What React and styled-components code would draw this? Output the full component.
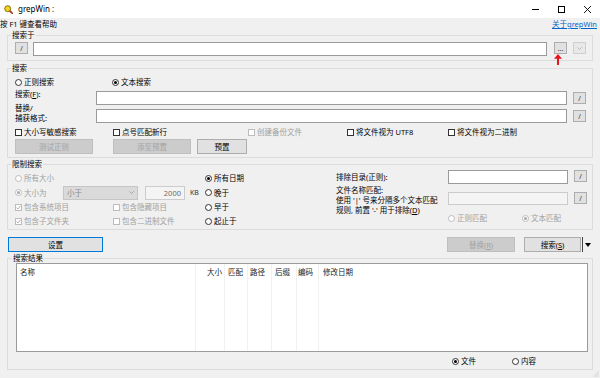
import React from 'react';
import styled, { createGlobalStyle } from 'styled-components';

// grepWin 主窗口

const FONT = `"Noto Sans", "Noto Sans CJK SC", sans-serif`;

const GlobalStyle = createGlobalStyle`
  html, body { margin: 0; padding: 0; background: #f0f0f0; }
  * { box-sizing: border-box; }
`;

const Window = styled.div`
  width: 600px;
  height: 378px;
  position: relative;
  overflow: hidden;
  background: #f0f0f0;
  font-family: ${FONT};
  font-size: 7.5px;
  line-height: 10px;
  color: #000;
  display: flex;
  flex-direction: column;
`;

const TitleBar = styled.div`
  height: 18px;
  flex: none;
  background: #fff;
  display: flex;
  align-items: center;
  padding-left: 4px;
`;

const TitleText = styled.span`
  margin-left: 5px;
  font-size: 8px;
  color: #000;
`;

const Controls = styled.div`
  margin-left: auto;
  display: flex;
  height: 100%;
`;

const CtrlBox = styled.div`
  width: 26px;
  height: 100%;
  display: flex;
  align-items: center;
  justify-content: center;
`;

const HelpRow = styled.div`
  height: 12px;
  flex: none;
  display: flex;
  align-items: center;
  justify-content: space-between;
  padding: 0 3px 0 0;
  line-height: 12px;
`;

const AboutLink = styled.a`
  color: #0066cc;
  text-decoration: underline;
`;

const Group = styled.fieldset`
  margin: ${(p) => p.$mt || 0}px 7px 0 7px;
  padding: ${(p) => p.$pt ?? 2}px ${(p) => p.$pr ?? 6}px ${(p) => p.$pb ?? 4}px ${(p) => p.$pl ?? 7}px;
  border: 1px solid #dcdcdc;
  min-width: 0;
  flex: none;
`;

const Legend = styled.legend`
  padding: 0 1px;
  margin-left: -4px;
  line-height: 10px;
  font-size: 7.5px;
`;

const Row = styled.div`
  display: flex;
  align-items: ${(p) => p.$align || 'center'};
  margin-top: ${(p) => p.$mt || 0}px;
  height: ${(p) => (p.$h ? `${p.$h}px` : 'auto')};
`;

const TextBox = styled.div`
  height: ${(p) => p.$h || 14}px;
  width: ${(p) => (p.$w ? `${p.$w}px` : 'auto')};
  flex: ${(p) => (p.$grow ? '1 1 auto' : 'none')};
  margin: ${(p) => p.$m || '0'};
  background: ${(p) => (p.$disabled ? '#f4f4f4' : '#fff')};
  border: 1px solid ${(p) => (p.$disabled ? '#cccccc' : '#9a9a9a')};
  color: #6d6d6d;
  display: flex;
  align-items: center;
  justify-content: ${(p) => (p.$right ? 'flex-end' : 'flex-start')};
  padding: 0 3px;
`;

const SmallBtn = styled.div`
  width: 13px;
  height: 12px;
  flex: none;
  margin: ${(p) => p.$m || '0'};
  background: ${(p) => (p.$disabled ? '#e8e8e8' : '#e1e1e1')};
  border: 1px solid ${(p) => (p.$disabled ? '#cfcfcf' : '#adadad')};
  color: ${(p) => (p.$disabled ? '#b0b0b0' : '#333')};
  display: flex;
  align-items: center;
  justify-content: center;
  font-size: 7px;
  line-height: 1;
`;

const Btn = styled.div`
  width: ${(p) => p.$w}px;
  height: 15px;
  flex: none;
  margin: ${(p) => p.$m || '0'};
  display: flex;
  align-items: center;
  justify-content: center;
  background: ${(p) => (p.$disabled ? '#cccccc' : '#e1e1e1')};
  border: 1px solid ${(p) => (p.$default ? '#0078d7' : p.$disabled ? '#bfbfbf' : '#adadad')};
  color: ${(p) => (p.$disabled ? '#a3a3a3' : '#000')};
`;

const SplitArrow = styled.div`
  width: 11px;
  height: 15px;
  flex: none;
  display: flex;
  align-items: center;
  justify-content: center;
  border-left: 1px solid #444;
  margin-left: 1px;
`;

const Opt = styled.span`
  display: inline-flex;
  align-items: center;
  gap: 2px;
  flex: none;
  white-space: nowrap;
  width: ${(p) => (p.$w ? `${p.$w}px` : 'auto')};
  color: ${(p) => (p.$disabled ? '#a0a0a0' : '#000')};
`;

const Mark = styled.span`
  width: 7px;
  height: 7px;
  flex: none;
  border: 1px solid ${(p) => (p.$disabled ? '#bcbcbc' : '#333')};
  border-radius: ${(p) => (p.$round ? '50%' : '0')};
  background: #fff;
  display: inline-flex;
  align-items: center;
  justify-content: center;
`;

const Dot = styled.span`
  width: 3px;
  height: 3px;
  border-radius: 50%;
  background: ${(p) => (p.$disabled ? '#a8a8a8' : '#000')};
`;

const FieldLabel = styled.div`
  width: ${(p) => p.$w}px;
  flex: none;
  margin-top: ${(p) => p.$mt || 0}px;
  white-space: nowrap;
`;

const LimitArea = styled.div`
  display: flex;
  align-items: flex-start;
`;

const StackBlock = styled.div`
  width: ${(p) => p.$w}px;
  flex: none;
  padding-top: 1px;
  display: grid;
  grid-template-rows: 14px 15px 14px 14px;
`;

const Line = styled.div`
  display: flex;
  align-items: center;
`;

const Combo = styled.div`
  width: 75px;
  height: 14px;
  flex: none;
  background: #dadada;
  border: 1px solid #c6c6c6;
  color: #8a8a8a;
  display: flex;
  align-items: center;
  justify-content: space-between;
  padding: 0 3px;
`;

const Unit = styled.span`
  margin-left: 5px;
  color: #333;
  font-size: 7px;
`;

const RightBlock = styled.div`
  flex: 1;
  display: grid;
  grid-template-columns: 106px 120px 12px;
  grid-template-rows: 14px 26px 12px;
  column-gap: 6px;
  row-gap: 1px;
`;

const Cell = styled.div`
  grid-column: ${(p) => p.$col || 'auto'};
  grid-row: ${(p) => p.$row || 'auto'};
  align-self: ${(p) => p.$self || 'start'};
  margin-top: ${(p) => p.$mt || 0}px;
  display: flex;
  white-space: nowrap;
`;

const MultiLabel = styled.div`
  grid-column: 1;
  grid-row: 2 / 4;
  line-height: 10px;
  white-space: nowrap;
`;

const ActionRow = styled.div`
  display: flex;
  align-items: center;
  margin: 7px 7px 0 8px;
  flex: none;
`;

const Spacer = styled.div`
  flex: 1;
`;

const List = styled.div`
  height: 89px;
  background: #fff;
  border: 1px solid #9b9b9b;
  display: flex;
`;

const Column = styled.div`
  width: ${(p) => (p.$w ? `${p.$w}px` : 'auto')};
  flex: ${(p) => (p.$w ? 'none' : '1')};
  height: 100%;
  border-right: ${(p) => (p.$last ? 'none' : '1px solid #f1f1f1')};
  padding: 0 ${(p) => p.$pr || 0}px 0 ${(p) => p.$pl || 0}px;
  text-align: ${(p) => (p.$right ? 'right' : 'left')};
  line-height: 17px;
  white-space: nowrap;
  color: #222;
`;

const Underline = styled.span`
  text-decoration: underline;
`;

const Arrow = styled.svg`
  position: absolute;
  left: 554px;
  top: 54px;
`;

const Grip = styled.svg`
  position: absolute;
  right: 1px;
  bottom: 1px;
`;

const Check = ({ label, checked, disabled, w }) => (
  <Opt $w={w} $disabled={disabled}>
    <Mark $disabled={disabled}>
      {checked && (
        <svg width="5" height="5" viewBox="0 0 5 5">
          <path d="M0.5 2.6 L2 4 L4.5 0.8" fill="none" stroke={disabled ? '#a8a8a8' : '#000'} strokeWidth="0.9" />
        </svg>
      )}
    </Mark>
    {label}
  </Opt>
);

const Radio = ({ label, checked, disabled, w }) => (
  <Opt $w={w} $disabled={disabled}>
    <Mark $round $disabled={disabled}>{checked && <Dot $disabled={disabled} />}</Mark>
    {label}
  </Opt>
);

const columns = [
  { name: '名称', w: 179, pl: 3 },
  { name: '大小', w: 29, pr: 2, right: true },
  { name: '匹配', w: 23, pl: 3 },
  { name: '路径', w: 24, pl: 2 },
  { name: '后缀', w: 25, pl: 3 },
  { name: '编码', w: 22, pl: 1 },
  { name: '修改日期', pl: 4, last: true },
];

export default function App() {
  return (
    <>
      <GlobalStyle />
      <Window>
        <TitleBar>
          <svg width="9" height="9" viewBox="0 0 9 9">
            <line x1="5.5" y1="5.5" x2="8.4" y2="8.4" stroke="#b0402a" strokeWidth="1.8" strokeLinecap="round" />
            <circle cx="3.7" cy="3.7" r="3" fill="#f4d41c" stroke="#7a6410" strokeWidth="0.9" />
          </svg>
          <TitleText>grepWin :</TitleText>
          <Controls>
            <CtrlBox>
              <svg width="7" height="7" viewBox="0 0 7 7">
                <line x1="0" y1="3.5" x2="7" y2="3.5" stroke="#000" strokeWidth="1" />
              </svg>
            </CtrlBox>
            <CtrlBox>
              <svg width="7" height="7" viewBox="0 0 7 7">
                <rect x="0.5" y="0.5" width="6" height="6" fill="none" stroke="#000" strokeWidth="1" />
              </svg>
            </CtrlBox>
            <CtrlBox>
              <svg width="7" height="7" viewBox="0 0 7 7">
                <path d="M0 0 L7 7 M7 0 L0 7" stroke="#000" strokeWidth="0.9" />
              </svg>
            </CtrlBox>
          </Controls>
        </TitleBar>

        <HelpRow>
          <span>按 F1 键查看帮助</span>
          <AboutLink>关于grepWin</AboutLink>
        </HelpRow>

        <Group $pt={2} $pb={4}>
          <Legend>搜索于</Legend>
          <Row $align="flex-start">
            <SmallBtn>/</SmallBtn>
            <TextBox $grow $m="0 7px 0 5px" />
            <SmallBtn>...</SmallBtn>
            <SmallBtn $disabled $m="0 0 0 6px">
              <svg width="5" height="3" viewBox="0 0 5 3">
                <path d="M0.3 0.3 L2.5 2.5 L4.7 0.3" fill="none" stroke="#b0b0b0" strokeWidth="0.8" />
              </svg>
            </SmallBtn>
          </Row>
        </Group>

        <Group $mt={2} $pt={4} $pb={3}>
          <Legend>搜索</Legend>
          <Row $h={10}>
            <Radio w={97} label="正则搜索" />
            <Radio checked label="文本搜索" />
          </Row>
          <Row $mt={4} $align="flex-start">
            <FieldLabel $w={81} $mt={-2}>
              搜索(<Underline>F</Underline>):
            </FieldLabel>
            <TextBox $grow />
            <SmallBtn $m="1px 0 0 6px">/</SmallBtn>
          </Row>
          <Row $mt={4} $align="flex-start">
            <FieldLabel $w={81} $mt={-6}>
              替换/
              <br />
              捕获格式:
            </FieldLabel>
            <TextBox $grow />
            <SmallBtn $m="1px 0 0 6px">/</SmallBtn>
          </Row>
          <Row $mt={4} $h={10}>
            <Check w={98} label="大小写敏感搜索" />
            <Check w={135} label="点号匹配新行" />
            <Check w={99} disabled label="创建备份文件" />
            <Check w={101} label="将文件视为 UTF8" />
            <Check label="将文件视为二进制" />
          </Row>
          <Row $mt={2}>
            <Btn $w={78} $disabled>测试正则</Btn>
            <Btn $w={78} $disabled $m="0 0 0 20px">添至预置</Btn>
            <Btn $w={50} $m="0 0 0 6px">预置</Btn>
          </Row>
        </Group>

        <Group $mt={1} $pt={1} $pb={1}>
          <Legend>限制搜索</Legend>
          <LimitArea>
            <StackBlock $w={190}>
              <Line>
                <Radio disabled label="所有大小" />
              </Line>
              <Line>
                <Radio w={48} disabled checked label="大小为" />
                <Combo>
                  <span>小于</span>
                  <svg width="5" height="3" viewBox="0 0 5 3">
                    <path d="M0.3 0.3 L2.5 2.5 L4.7 0.3" fill="none" stroke="#9a9a9a" strokeWidth="0.8" />
                  </svg>
                </Combo>
                <TextBox $w={40} $disabled $right $m="0 0 0 7px">2000</TextBox>
                <Unit>KB</Unit>
              </Line>
              <Line>
                <Check w={98} disabled checked label="包含系统项目" />
                <Check disabled label="包含隐藏项目" />
              </Line>
              <Line>
                <Check w={98} disabled checked label="包含子文件夹" />
                <Check disabled label="包含二进制文件" />
              </Line>
            </StackBlock>

            <StackBlock $w={131}>
              <Line><Radio checked label="所有日期" /></Line>
              <Line><Radio label="晚于" /></Line>
              <Line><Radio label="早于" /></Line>
              <Line><Radio label="起止于" /></Line>
            </StackBlock>

            <RightBlock>
              <Cell $col="1" $row="1" $self="center">排除目录(正则):</Cell>
              <Cell $col="2" $row="1"><TextBox $grow /></Cell>
              <Cell $col="3" $row="1"><SmallBtn>/</SmallBtn></Cell>
              <MultiLabel>
                文件名称匹配:
                <br />
                使用 '|' 号来分隔多个文本匹配
                <br />
                规则, 前置 '-' 用于排除(<Underline>D</Underline>)
              </MultiLabel>
              <Cell $col="2" $row="2" $mt={7}><TextBox $grow $h={13} $disabled /></Cell>
              <Cell $col="3" $row="2" $mt={7}><SmallBtn>/</SmallBtn></Cell>
              <Cell $col="2 / 4" $row="3" $self="center">
                <Radio w={74} disabled label="正则匹配" />
                <Radio disabled checked label="文本匹配" />
              </Cell>
            </RightBlock>
          </LimitArea>
        </Group>

        <ActionRow>
          <Btn $w={95} $default>设置</Btn>
          <Spacer />
          <Btn $w={68} $disabled $m="0 9px 0 0">替换(<Underline>R</Underline>)</Btn>
          <Btn $w={57}>搜索(<Underline>S</Underline>)</Btn>
          <SplitArrow>
            <svg width="6" height="4" viewBox="0 0 6 4">
              <path d="M0 0 L6 0 L3 4 Z" fill="#000" />
            </svg>
          </SplitArrow>
        </ActionRow>

        <Group $mt={1} $pt={0} $pb={3} $pl={8} $pr={4}>
          <Legend>搜索结果</Legend>
          <List>
            {columns.map((c) => (
              <Column key={c.name} $w={c.w} $pl={c.pl} $pr={c.pr} $right={c.right} $last={c.last}>
                {c.name}
              </Column>
            ))}
          </List>
          <Row $mt={4} $h={10}>
            <Spacer />
            <Radio w={60} checked label="文件" />
            <Radio w={76} label="内容" />
          </Row>
        </Group>

        <Arrow width="8" height="11" viewBox="0 0 8 11">
          <path d="M4 0 L8 4.8 L0 4.8 Z" fill="#e8141b" />
          <rect x="3" y="4" width="2" height="7" fill="#e8141b" />
        </Arrow>

        <Grip width="6" height="6" viewBox="0 0 6 6">
          <rect x="4.5" y="0.5" width="1" height="1" fill="#bdbdbd" />
          <rect x="2.5" y="2.5" width="1" height="1" fill="#bdbdbd" />
          <rect x="4.5" y="2.5" width="1" height="1" fill="#bdbdbd" />
          <rect x="0.5" y="4.5" width="1" height="1" fill="#bdbdbd" />
          <rect x="2.5" y="4.5" width="1" height="1" fill="#bdbdbd" />
          <rect x="4.5" y="4.5" width="1" height="1" fill="#bdbdbd" />
        </Grip>
      </Window>
    </>
  );
}
